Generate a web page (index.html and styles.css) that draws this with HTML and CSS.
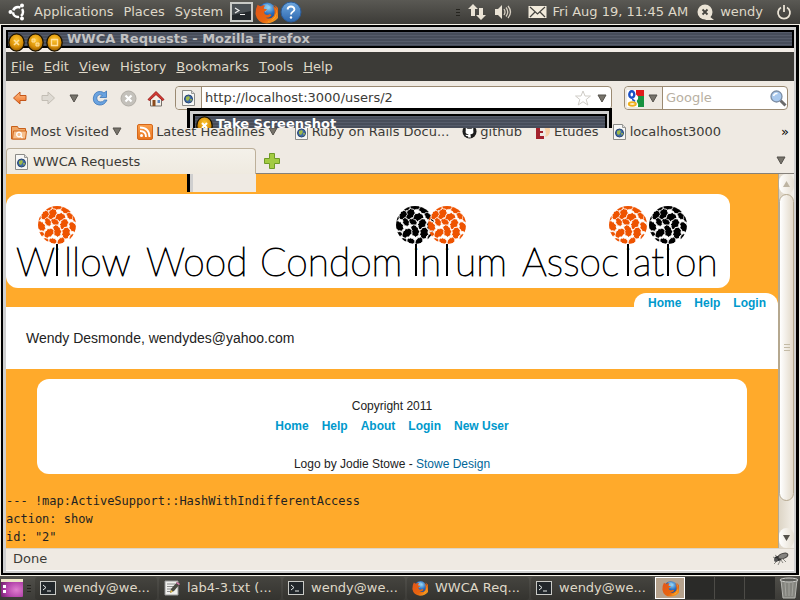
FILE: index.html
```html
<!DOCTYPE html>
<html lang="en">
<head>
<meta charset="utf-8">
<title>WWCA Requests</title>
<link rel="stylesheet" href="styles.css">
</head>
<body>
<svg class="defs" aria-hidden="true">
  <defs>
    <linearGradient id="g-back" x1="0" y1="0" x2="0" y2="1"><stop offset="0" stop-color="#ffc08a"/><stop offset="1" stop-color="#ee7024"/></linearGradient>
    <linearGradient id="g-help" x1="0" y1="0" x2="0" y2="1"><stop offset="0" stop-color="#6fa8e0"/><stop offset="1" stop-color="#2c66ae"/></linearGradient>
    <linearGradient id="g-rss" x1="0" y1="0" x2="0" y2="1"><stop offset="0" stop-color="#fba04e"/><stop offset="1" stop-color="#e8731c"/></linearGradient>
    <radialGradient id="g-knob" cx=".5" cy=".35" r=".7"><stop offset="0" stop-color="#ffc62e"/><stop offset=".6" stop-color="#d88f08"/><stop offset="1" stop-color="#7a4a00"/></radialGradient>
    <radialGradient id="g-globe" cx=".6" cy=".3" r=".7"><stop offset="0" stop-color="#8fd3f5"/><stop offset=".5" stop-color="#2a6ec0"/><stop offset="1" stop-color="#123a7c"/></radialGradient>
    <linearGradient id="g-fox" x1="0" y1="0" x2="1" y2="1"><stop offset="0" stop-color="#e2541a"/><stop offset=".6" stop-color="#e8660f"/><stop offset="1" stop-color="#ffc12e"/></linearGradient>
    <radialGradient id="g-desk" cx=".7" cy=".6" r=".8"><stop offset="0" stop-color="#e07fd0"/><stop offset=".6" stop-color="#b040a8"/><stop offset="1" stop-color="#70206c"/></radialGradient>
    <symbol id="tri" viewBox="0 0 10 9"><path d="M1 1h8L5 8z" fill="#77736b" stroke="#55524c"/></symbol>
    <symbol id="page" viewBox="0 0 15 16"><path d="M1.500.5h9l3 3v12h-12z" fill="#f7f7f5" stroke="#8b8b87"/><path d="M10.500.5v3h3" fill="#ddd" stroke="#9a9a96"/><circle cx="7.500" cy="9" r="4" fill="#3e6aa8" stroke="#28456f"/><path d="M5 7l3-1 1 2-2 3-2-1zM9 9l2 0-1 3z" fill="#9fb84a"/></symbol>
    <symbol id="term" viewBox="0 0 16 14"><rect x=".5" y=".5" width="15" height="13" fill="#22272b" stroke="#c9cac6"/><path d="M3 4l3 2.500L3 9M7 10h4" fill="none" stroke="#e8ecea"/></symbol>
    <symbol id="fox" viewBox="0 0 22 22"><circle cx="11.500" cy="10" r="8.500" fill="url(#g-globe)"/><path d="M8 3l4 0 3 3-3 2-2 3-2-3z" fill="#9ad6f2" opacity=".55"/><path d="M2.500 3.500Q4 4.500 5.500 5 8 3.500 10 4.500 8 5.500 8.500 7.500l3 .5q-.5 1.500-2.500 2-.5 2 1 3 2 1 4-.5 2.500.5 1 2-2 2-5 1.500 5 2 8-2 2-4-1-9.500 3 1.500 4 5-.5-4-3-6 6 3 6 9.500Q20.500 21 11 21.500 2 21 .5 12.500.5 7 2.500 3.500z" fill="url(#g-fox)"/><path d="M19 5q3 7-1 11.500-3 3-7 3 8 0 9.500-7Q21 8 19 5z" fill="#ffcf3a"/></symbol>
    <symbol id="etudes" viewBox="0 0 16 16"><path d="M1 1h8v3H5v3h3v2H5v3h4v3H1z" fill="#a3222c"/><path d="M9 3q6-2 6 3 0 6-5 7 2-4-1-10z" fill="#f6cfa4"/></symbol>
    <clipPath id="crown"><circle r="19"/></clipPath>
    <path id="leaf" d="M-7 1L-6-2-4-2.500-4-4-1-4 1-5.500 3-4 5-4 7 0 5.500 1.500 5 3.500 2 4 0 5.500-2.500 4-5 4.500z"/>
    <g id="tree" clip-path="url(#crown)" stroke="#fff">
      <use href="#leaf" transform="translate(3 -8) rotate(5) scale(.85)"/>
      <use href="#leaf" transform="translate(9 -15) rotate(35) scale(.8)"/>
      <use href="#leaf" transform="translate(-5 -11) rotate(-45) scale(.9)"/>
      <use href="#leaf" transform="translate(-12 -10) rotate(-45) scale(.75)"/>
      <use href="#leaf" transform="translate(0 -18) rotate(8) scale(.75 .55)"/>
      <use href="#leaf" transform="translate(-8 -17) rotate(-25) scale(.5)"/>
      <use href="#leaf" transform="translate(13 -9) rotate(60) scale(.6)"/>
      <use href="#leaf" transform="translate(7 -1) rotate(-55) scale(.85)"/>
      <use href="#leaf" transform="translate(-2 -3) rotate(40) scale(.65)"/>
      <use href="#leaf" transform="translate(-9 -3) rotate(75) scale(.65)"/>
      <use href="#leaf" transform="translate(-16 1) rotate(65) scale(.85)"/>
      <use href="#leaf" transform="translate(0 6) rotate(85) scale(.9)"/>
      <use href="#leaf" transform="translate(9 8) rotate(-70) scale(.9)"/>
      <use href="#leaf" transform="translate(-8 8) rotate(-30) scale(.85)"/>
      <use href="#leaf" transform="translate(16 2) rotate(75) scale(.8)"/>
      <use href="#leaf" transform="translate(-16 9) rotate(10) scale(.5)"/>
      <use href="#leaf" transform="translate(4 16) rotate(-30) scale(.65)"/>
      <use href="#leaf" transform="translate(-4 16) rotate(30) scale(.6)"/>
      <use href="#leaf" transform="translate(-11 15) rotate(30) scale(.4)"/>
      <use href="#leaf" transform="translate(15 12) rotate(-50) scale(.5)"/>
      <use href="#leaf" transform="translate(18 -6) rotate(80) scale(.5)"/>
      <use href="#leaf" transform="translate(-18 -7) rotate(-70) scale(.4)"/>
    </g>
  </defs>
</svg>

<header class="panel">
  <svg class="i-ubuntu" width="18" height="18" viewBox="0 0 18 18"><circle cx="10" cy="9" r="5" fill="none" stroke="#fff" stroke-width="2.500" stroke-dasharray="8.500 2" stroke-dashoffset="4"/><circle cx="2.500" cy="9" r="2" fill="#fff"/><circle cx="14" cy="2.500" r="2" fill="#fff"/><circle cx="14" cy="15.500" r="2" fill="#fff"/></svg>
  <nav class="panel-menu"><button>Applications</button><button>Places</button><button>System</button></nav>
  <div class="launchers">
    <svg width="23" height="20" viewBox="0 0 23 20"><rect x="1" y="1" width="21" height="18" fill="#23282c" stroke="#c9cac6" stroke-width="2"/><path d="M2 2h19v7L2 13z" fill="#4a5054"/><path d="M5 6l4 2.500L5 11M10 12.500h5" fill="none" stroke="#eee" stroke-width="1.200"/></svg>
    <svg width="23" height="23"><use href="#fox"/></svg>
    <svg width="22" height="22" viewBox="0 0 22 22"><circle cx="11" cy="11" r="10" fill="url(#g-help)" stroke="#2b5c99"/><path d="M7.500 8.500Q8 5.500 11 5.500t3.500 2.800Q14.500 10 12.500 11 11 12 11 13.500" fill="none" stroke="#fff" stroke-width="1.800"/><circle cx="11" cy="16.500" r="1.200" fill="#fff"/></svg>
  </div>
  <div class="tray">
    <span class="grip"></span>
    <svg class="i-net" width="18" height="18" viewBox="0 0 18 18" fill="#eae3d5"><path d="M5 1l5 5H7v7H3V6H0zM13 17l5-5h-3V5h-4v7H8z"/></svg>
    <svg class="i-vol" width="17" height="16" viewBox="0 0 17 16"><path d="M0 5h3l4-4v14l-4-4H0z" fill="#eae3d5"/><path d="M9 5q2 3 0 6M11 3.500q3.500 4.500 0 9M13 2q5 6 0 12" fill="none" stroke="#d5cec1" stroke-width="1.300"/></svg>
    <svg class="i-mail" width="19" height="14" viewBox="0 0 19 14"><rect x=".5" y="1" width="18" height="12" fill="#f2ebdc"/><path d="M2 2l7.500 7L17 2M2 12l5-5M17 12l-5-5" fill="none" stroke="#45443f" stroke-width="1.200"/></svg>
    <button class="clock">Fri Aug 19, 11:45 AM</button>
    <svg class="i-chat" width="18" height="16" viewBox="0 0 18 16"><circle cx="8" cy="8" r="7.500" fill="#eae3d5"/><path d="M12 12l5 4H8z" fill="#eae3d5"/><path d="M5.500 5.500l5 5m0-5l-5 5" stroke="#45443f" stroke-width="1.800"/></svg>
    <button class="user">wendy</button>
    <svg class="i-power" width="16" height="16" viewBox="0 0 16 16" fill="none" stroke="#eae3d5" stroke-width="1.800"><path d="M5 3.500a6 6 0 1 0 6 0M8 1v7"/></svg>
  </div>
</header>

<main class="window">
  <div class="titlebar">
    <button class="knob" aria-label="Close window"><svg width="17" height="19" viewBox="0 0 17 19"><ellipse cx="8.500" cy="9.500" rx="7.700" ry="8.700" fill="url(#g-knob)" stroke="#1a1200" stroke-width="1.300"/><path d="M6 7l5 5m0-5l-5 5" stroke="#ffe09a" stroke-width="1.700"/></svg></button>
    <button class="knob" aria-label="Minimize"><svg width="17" height="19" viewBox="0 0 17 19"><ellipse cx="8.500" cy="9.500" rx="7.700" ry="8.700" fill="url(#g-knob)" stroke="#1a1200" stroke-width="1.300"/><path d="M5 6h3v3H5zM9 10h3v3H9z" fill="#ffe09a" stroke="#ffe09a" fill-opacity=".4"/></svg></button>
    <button class="knob" aria-label="Maximize"><svg width="17" height="19" viewBox="0 0 17 19"><ellipse cx="8.500" cy="9.500" rx="7.700" ry="8.700" fill="url(#g-knob)" stroke="#1a1200" stroke-width="1.300"/><path d="M5.500 6.500h6v6h-6z" fill="none" stroke="#ffe09a" stroke-width="1.400"/></svg></button>
    <h1>WWCA Requests - Mozilla Firefox</h1>
  </div>

  <nav class="menubar">
    <button><u>F</u>ile</button><button><u>E</u>dit</button><button><u>V</u>iew</button><button>Hi<u>s</u>tory</button><button><u>B</u>ookmarks</button><button><u>T</u>ools</button><button><u>H</u>elp</button>
  </nav>

  <div class="navbar">
    <div class="nav-buttons">
      <button aria-label="Back"><svg width="16" height="16" viewBox="0 0 16 16"><path d="M1.500 8L8 2v3.500h6v5H8V14z" fill="url(#g-back)" stroke="#c4561a"/></svg></button>
      <button aria-label="Forward"><svg width="16" height="16" viewBox="0 0 16 16"><path d="M14.500 8L8 2v3.500H2v5h6V14z" fill="#dedad3" stroke="#c2bdb4"/></svg></button>
      <button class="history" aria-label="Recent pages"><svg width="10" height="9"><use href="#tri"/></svg></button>
      <button aria-label="Reload"><svg width="16" height="16" viewBox="0 0 16 16"><path d="M14.500 1v6.500H8l2.300-2.300Q7 3.500 5 6.500 4 11 8 12q3 .3 4.500-2h2.500q-2.500 5.500-8 5Q1 14 1.300 8 2.500 1 8.500 1.500q2 .2 3.500 1.500z" fill="#6aa3e0" stroke="#3b75b8" stroke-width=".8"/></svg></button>
      <button class="stop" aria-label="Stop"><svg width="17" height="17" viewBox="0 0 17 17"><circle cx="8.500" cy="8.500" r="7.500" fill="#c4c1bb" stroke="#b1ada6"/><path d="M5.500 5.500l6 6m0-6l-6 6" stroke="#fff" stroke-width="2.200"/></svg></button>
      <button class="home" aria-label="Home"><svg width="18" height="17" viewBox="0 0 18 17"><path d="M3.500 8v8h11V8L9 3z" fill="#f3efe8" stroke="#77706a"/><path d="M1 9.500L9 1.500l8 8-1.500 1L9 4.500l-6.500 6z" fill="#d83a34" stroke="#9b1f1c"/><path d="M5.500 10h3v6h-3z" fill="#8a4b1d"/><path d="M10.500 10h2.500v3h-2.500z" fill="#5c86bf"/></svg></button>
    </div>
    <div class="urlbar">
      <span class="identity"><svg width="15" height="16"><use href="#page"/></svg></span>
      <input type="text" aria-label="Location" value="http://localhost:3000/users/2">
      <button aria-label="Bookmark this page"><svg width="16" height="16" viewBox="0 0 16 16"><path d="M8 1l2 5h5.500l-4.300 3.500L12.800 15 8 11.700 3.200 15l1.600-5.500L.5 6H6z" fill="#fff" stroke="#cfccc6"/></svg></button>
      <button class="drop" aria-label="Show history"><svg width="10" height="9"><use href="#tri"/></svg></button>
    </div>
    <div class="searchbar">
      <button class="engine" aria-label="Search engine"><svg width="17" height="17" viewBox="0 0 17 17"><path d="M0 0h17v17H0z" fill="#fff"/><path d="M9 0h8v6H9z" fill="#e01b1b"/><path d="M8 6h9v11H9z" fill="#18923f"/><path d="M8 4q4 2 3 5-2 2-1 3 2 2 1 5H5V4z" fill="#fff"/><ellipse cx="4.800" cy="4.500" rx="2.500" ry="3.300" fill="#fff" stroke="#1b4fc4" stroke-width="2.400"/><path d="M5 9.500q2 .5 3 2" stroke="#1b4fc4" stroke-width="1.500" fill="none"/><ellipse cx="5.300" cy="14" rx="3.500" ry="1.800" fill="#fff" stroke="#f0b01c" stroke-width="2"/></svg><svg width="10" height="9"><use href="#tri"/></svg></button>
      <input type="text" aria-label="Search" placeholder="Google">
      <button aria-label="Go"><svg width="17" height="17" viewBox="0 0 17 17"><path d="M10.500 10.500l5 5" stroke="#6b6b6b" stroke-width="3"/><circle cx="6.500" cy="6.500" r="5.500" fill="#a9c9ee" stroke="#7c8da3" stroke-width="1.300"/><path d="M3.500 6q1-3 4-2.500" fill="none" stroke="#fff" stroke-width="1.500"/></svg></button>
    </div>
  </div>

  <nav class="bookmarks">
    <a href="#"><svg width="16" height="16" viewBox="0 0 16 16"><path d="M.5 2.500h6l1 2h7v10.500h-14z" fill="#f0a766" stroke="#c8601a"/><path d="M2.500 7h13l-1 8H1.500z" fill="#f7c08e" stroke="#d0661d"/><circle cx="8" cy="10.500" r="2.300" fill="none" stroke="#fff" stroke-width="1.300"/><path d="M9.500 12l2 2" stroke="#fff" stroke-width="1.300"/></svg><span>Most Visited</span><svg width="10" height="9"><use href="#tri"/></svg></a>
    <a class="feed" href="#"><svg width="16" height="16" viewBox="0 0 16 16"><rect x=".5" y=".5" width="15" height="15" rx="1.500" fill="url(#g-rss)" stroke="#d5671a"/><circle cx="4.500" cy="11.500" r="1.500" fill="#fff"/><path d="M3 7q6 0 6 6M3 3.500q9.500 0 9.500 9.500" fill="none" stroke="#fff" stroke-width="1.800"/></svg><span>Latest Headlines</span><svg width="10" height="9"><use href="#tri"/></svg></a>
    <a class="rails" href="#"><svg width="15" height="16"><use href="#page"/></svg><span>Ruby on Rails Docu...</span></a>
    <a class="site" href="#"><svg width="15" height="15" viewBox="0 0 16 16"><circle cx="8" cy="8" r="7.500" fill="#1d1d1d"/><path d="M4 4l2 1h4l2-1v3q1 4-3 4l.5 3.500h-3V13q-2 .5-3-1.500l3 .3L7 11Q3 11 4 7z" fill="#fff"/></svg><span>github</span></a>
    <a class="site" href="#"><svg width="16" height="16"><use href="#etudes"/></svg><span>Etudes</span></a>
    <a class="site" href="#"><svg width="15" height="16"><use href="#page"/></svg><span>localhost3000</span></a>
    <button class="more" aria-label="More bookmarks">»</button>
  </nav>

  <div class="tabs">
    <button class="tab"><svg width="15" height="16"><use href="#page"/></svg><span>WWCA Requests</span></button>
    <div class="tab-rest">
      <button aria-label="New tab"><svg width="16" height="16" viewBox="0 0 16 16"><path d="M5.500.5h5v5h5v5h-5v5h-5v-5h-5v-5h5z" fill="#a3cb42" stroke="#6f9a26"/></svg></button>
      <button aria-label="List all tabs"><svg width="10" height="9"><use href="#tri"/></svg></button>
    </div>
  </div>

  <div class="viewport">
    <div class="ghost"></div>
    <div class="page">
      <div class="logo">
        <svg width="724" height="94" viewBox="0 0 724 94" role="img" aria-label="Willow Wood Condominium Association">
          <text class="wordmark" y="82"><tspan x="10">W</tspan><tspan class="stem" x="51">i</tspan><tspan x="58">llow </tspan><tspan x="140">Wood </tspan><tspan x="254">Condom</tspan><tspan class="stem" x="410">i</tspan><tspan x="414">n</tspan><tspan class="stem" x="441">i</tspan><tspan x="449">um </tspan><tspan x="516">Assoc</tspan><tspan class="stem" x="622">i</tspan><tspan x="627">at</tspan><tspan class="stem" x="662">i</tspan><tspan x="669">on</tspan></text>
          <path d="M51 50v32M410 50v32M441 50v32M622 50v32M662 50v32" stroke="#000" stroke-width="2"/>
          <g fill="#000"><use href="#tree" x="409" y="31"/><use href="#tree" x="662" y="31"/></g>
          <g fill="#ee5300"><use href="#tree" x="51" y="31"/><use href="#tree" x="441" y="31"/><use href="#tree" x="622" y="31"/></g>
        </svg>
      </div>
      <nav class="site-nav"><a href="#">Home</a><a href="#">Help</a><a href="#">Login</a></nav>
      <section class="content"><p>Wendy Desmonde, wendydes@yahoo.com</p></section>
      <footer class="site-footer">
        <p>Copyright 2011</p>
        <nav><a href="#">Home</a><a href="#">Help</a><a href="#">About</a><a href="#">Login</a><a href="#">New User</a></nav>
        <p class="credit">Logo by Jodie Stowe - <a href="#">Stowe Design</a></p>
      </footer>
      <pre class="debug">--- !map:ActiveSupport::HashWithIndifferentAccess
action: show
id: "2"</pre>
    </div>
    <div class="scrollbar" aria-hidden="true">
      <div class="arrow up"><svg width="7" height="6" viewBox="0 0 7 6"><path d="M0 6L3.500 0 7 6z" fill="#bdb4a2"/></svg></div>
      <div class="thumb"><i></i></div>
      <div class="arrow down"><svg width="7" height="6" viewBox="0 0 7 6"><path d="M0 0L3.500 6 7 0z" fill="#55524c"/></svg></div>
    </div>
  </div>

  <div class="status"><span>Done</span><svg width="17" height="15" viewBox="0 0 17 15"><path d="M1 6l4 2M2 13l4-4M6 14l2-4M11 12l-2-3M14 11l-3-3M3 4l4 3" stroke="#8a8882"/><ellipse cx="6" cy="7.500" rx="3.500" ry="2.500" fill="#2b2b2b"/><ellipse cx="11" cy="5" rx="5" ry="2.500" transform="rotate(-20 11 5)" fill="#85837f" stroke="#44423f"/><circle cx="4" cy="9" r="2" fill="#555"/></svg></div>

  <div class="dialog">
    <div class="dialog-title"><svg width="17" height="19" viewBox="0 0 17 19"><ellipse cx="8.500" cy="9.500" rx="7.700" ry="8.700" fill="url(#g-knob)" stroke="#1a1200" stroke-width="1.300"/><path d="M6 7l5 5m0-5l-5 5" stroke="#fff" stroke-width="2"/></svg><span>Take Screenshot</span></div>
  </div>
</main>

<footer class="taskbar">
  <button class="show-desktop" aria-label="Show desktop"><svg width="22" height="18" viewBox="0 0 22 18"><rect width="22" height="18" rx="1" fill="url(#g-desk)"/><path d="M0 0h22v3H0z" fill="#ece5c8"/><path d="M2 6h3v3H2zM2 11h3v3H2z" fill="#fff"/></svg></button>
  <span class="grip"></span>
  <div class="tasks">
    <button><svg width="16" height="14"><use href="#term"/></svg><span>wendy@we...</span></button>
    <button><svg width="16" height="16" viewBox="0 0 16 16"><path d="M1 1h13v14H1z" fill="#efefec" stroke="#999"/><path d="M3 4h8M3 6.500h7M3 9h5M3 11.500h4" stroke="#8c8c8c"/><path d="M6 13l1-4 6-7 3 2-6 7z" fill="#4a4a42"/><path d="M13 2l3 2-1 1-3-2z" fill="#dd7fb4"/><path d="M6 13l1-3 2 1.500z" fill="#e5c04c"/></svg><span>lab4-3.txt (...</span></button>
    <button><svg width="16" height="14"><use href="#term"/></svg><span>wendy@we...</span></button>
    <button><svg width="16" height="16"><use href="#fox"/></svg><span>WWCA Req...</span></button>
    <button><svg width="16" height="14"><use href="#term"/></svg><span>wendy@we...</span></button>
  </div>
  <div class="workspaces">
    <button class="active" aria-label="Workspace 1"><svg width="17" height="17"><use href="#fox"/></svg></button><button aria-label="Workspace 2"></button><button aria-label="Workspace 3"></button><button aria-label="Workspace 4"></button>
  </div>
  <button class="trash" aria-label="Trash"><svg width="20" height="22" viewBox="0 0 20 22"><path d="M2 3l2 18h12l2-18z" fill="#85857f" stroke="#b5b5b0"/><path d="M6 6l1 13M10 6v13M14 6l-1 13" stroke="#a5a59f"/><ellipse cx="10" cy="3" rx="9" ry="2" fill="#5b5b57" stroke="#d0d0cc"/></svg></button>
</footer>
</body>
</html>
```
FILE: styles.css
```css
* { box-sizing: border-box; }

body {
  margin: 0;
  height: 100vh;
  display: flex;
  flex-direction: column;
  overflow: hidden;
  background: #f4f1e8;
  color: #3c3b37;
  font: 13px/16px "DejaVu Sans", sans-serif;
}

button {
  display: flex;
  align-items: center;
  margin: 0;
  padding: 0;
  border: 0;
  background: none;
  color: inherit;
  font: inherit;
  white-space: nowrap;
}

a { color: inherit; text-decoration: none; }
p { margin: 0; }
svg { display: block; flex: none; }
.defs { position: absolute; width: 0; height: 0; }

/* Top desktop panel */
.panel {
  flex: none;
  height: 24px;
  display: flex;
  align-items: center;
  padding: 0 8px;
  background: linear-gradient(#5a5954, #3c3b37);
  color: #dfd8c8;
}
.panel-menu { display: flex; gap: 10px; margin-left: 8px; }
.launchers { display: flex; align-items: center; gap: 2px; margin-left: 7px; }
.tray { display: flex; align-items: center; margin-left: auto; }
.grip {
  flex: none;
  width: 4px;
  height: 7px;
  background: repeating-linear-gradient(#25241f 0 1px, transparent 1px 3px);
}
.i-net { margin-left: 8px; }
.i-vol { margin-left: 9px; }
.i-mail { margin-left: 16px; }
.clock { margin-left: 6px; }
.i-chat { margin-left: 9px; }
.user { margin-left: 5px; }
.i-power { margin-left: 13px; }

/* Browser window frame */
.window {
  position: relative;
  flex: 1;
  min-height: 0;
  display: flex;
  flex-direction: column;
  margin: 1px;
  border: 2px solid #000;
  border-right-width: 3px;
  padding: 3px 2px 2px 3px;
  background: #cfcfcf;
}
.titlebar {
  flex: none;
  height: 18px;
  display: flex;
  align-items: center;
  gap: 2px;
  border: 2px solid #000;
  background: repeating-linear-gradient(#565c6a 0 1px, #474d5a 1px 3px);
  color: #c3c3c3;
}
.knob { position: relative; top: 3px; z-index: 1; }
.titlebar h1 { margin: 0 0 0 2px; font-size: 13px; line-height: 16px; }

.menubar {
  flex: none;
  display: flex;
  gap: 10px;
  height: 33px;
  padding: 0 5px;
  border-top: 4px solid #f2ece6;
  background: #3c3b37;
  color: #dfd8c8;
}

/* Toolbars */
.navbar {
  flex: none;
  display: flex;
  align-items: center;
  gap: 12px;
  height: 34px;
  padding: 0 6px;
  background: #efeae3;
}
.nav-buttons { display: flex; align-items: center; gap: 12px; }
.nav-buttons .history { margin: 0 1px; }
.nav-buttons .stop { margin-right: -2px; }
.urlbar, .searchbar {
  display: flex;
  align-items: center;
  height: 24px;
  border: 1px solid #9b8a72;
  border-radius: 4px;
  background: #fff;
}
.urlbar { flex: 1; margin-left: -2px; }
.searchbar { width: 164px; }
.identity, .engine {
  display: flex;
  align-items: center;
  height: 22px;
  border-right: 1px solid #9b8a72;
  border-radius: 4px 0 0 4px;
  background: #efeae3;
}
.identity { width: 26px; justify-content: center; }
.engine { width: 38px; gap: 4px; padding-left: 2px; }
.navbar input {
  flex: 1;
  min-width: 0;
  padding: 0 3px;
  border: 0;
  outline: 0;
  background: none;
  color: #3c3b37;
  font: inherit;
}
.navbar input::placeholder { color: #b8b0a2; opacity: 1; }
.urlbar .drop { margin: 0 4px 0 6px; }

.bookmarks {
  flex: none;
  display: flex;
  align-items: center;
  height: 33px;
  padding: 0 5px;
  background: #efeae3;
  white-space: nowrap;
}
.bookmarks a { display: flex; align-items: center; gap: 3px; }
.bookmarks .feed { margin-left: 15px; }
.bookmarks .rails { margin-left: 16px; }
.bookmarks .site { margin-left: 13px; }
.bookmarks .more { margin-left: auto; color: #000; }

.tabs { flex: none; display: flex; height: 26px; background: #efeae3; }
.tab {
  width: 250px;
  padding-left: 7px;
  gap: 4px;
  border: 1px solid #bdb09a;
  border-bottom: 0;
  border-radius: 4px 4px 0 0;
  background: linear-gradient(#f4f1ea, #efeae0);
}
.tab-rest {
  flex: 1;
  display: flex;
  align-items: center;
  justify-content: space-between;
  padding: 0 8px;
  border-bottom: 1px solid #85817a;
}

/* Rendered page */
.viewport { position: relative; flex: 1; min-height: 0; display: flex; }
.ghost {
  position: absolute;
  top: 0;
  left: 181px;
  width: 69px;
  height: 18px;
  border-left: 3px solid #000;
  background: linear-gradient(90deg, #cfcfcf 3px, #efeae3 3px);
}
.page {
  flex: 1;
  min-width: 0;
  overflow: hidden;
  padding-top: 20px;
  background: #ffaa2b;
  color: #222;
  font: 12px/20px "Liberation Sans", sans-serif;
}
.logo { width: fit-content; border-radius: 12px; background: #fff; }
.wordmark { font: 100 39px Lato, sans-serif; fill: #000; stroke: #000; stroke-width: 1px; }
.stem { text-anchor: middle; stroke: none; }
.site-nav, .site-footer nav { display: flex; gap: 13px; color: #0099cc; font-weight: bold; }
.site-nav {
  width: fit-content;
  height: 14px;
  margin: 5px 0 0 auto;
  padding: 0 12px 0 14px;
  border-radius: 12px 12px 0 0;
  background: #fff;
}
.content { padding: 21px 20px; background: #fff; font-size: 14px; }
.site-footer {
  margin: 10px 31px 0;
  padding-top: 17px;
  border-radius: 12px;
  background: #fff;
  text-align: center;
}
.site-footer nav { justify-content: center; }
.credit { padding-top: 18px; }
.credit a { color: #006699; }
.debug { margin: 18px 0 0; font: 12px/18px "DejaVu Sans Mono", monospace; }

.scrollbar {
  flex: none;
  width: 16px;
  display: flex;
  flex-direction: column;
  border-left: 1px solid #b5a88f;
  background: linear-gradient(90deg, #ddd5c6, #f3efe8);
}
.arrow { display: flex; justify-content: center; align-items: center; height: 20px; border-radius: 8px; background: linear-gradient(90deg, #fff, #e6dfd2); }
.arrow.down { margin-top: auto; }
.thumb {
  height: 82%;
  display: flex;
  align-items: center;
  justify-content: center;
  border: 1px solid #b5a88f;
  border-radius: 8px;
  background: linear-gradient(90deg, #fff, #e2d9c9);
}
.thumb i { width: 6px; height: 7px; background: repeating-linear-gradient(#c4bba6 0 1px, transparent 1px 3px); }

.status {
  flex: none;
  display: flex;
  align-items: center;
  justify-content: space-between;
  height: 23px;
  padding: 0 5px 2px 7px;
  border-top: 1px solid #dcd5c9;
  border-bottom: 1px solid #fff;
  background: #efeae3;
}

/* Partly painted dialog lying over the toolbars */
.dialog {
  position: absolute;
  top: 81px;
  left: 184px;
  right: 184px;
  height: 20px;
  overflow: hidden;
  border: 3px solid #000;
  border-bottom: 0;
  padding: 3px 2px 0 3px;
  background: #cfcfcf;
}
.dialog-title {
  height: 20px;
  display: flex;
  align-items: flex-start;
  gap: 3px;
  border: 2px solid #000;
  background: repeating-linear-gradient(#565c6a 0 1px, #474d5a 1px 3px);
  padding-left: 1px;
  color: #fff;
  font-weight: bold;
}

/* Bottom desktop panel */
.taskbar {
  flex: none;
  display: flex;
  align-items: center;
  height: 24px;
  padding: 0 1px;
  background: linear-gradient(#504f4a, #3c3b37);
  color: #dfd8c8;
}
.taskbar .grip { margin: 0 4px; }
.tasks { flex: 1; min-width: 0; display: flex; gap: 2px; }
.tasks button {
  flex: 1;
  min-width: 0;
  height: 23px;
  gap: 7px;
  padding-left: 5px;
  border-radius: 3px;
  background: linear-gradient(#45443f, #34332f);
  overflow: hidden;
}
.workspaces { display: flex; margin: 0 4px 0 2px; background: #2a2a28; }
.workspaces button { width: 30px; height: 22px; justify-content: center; border-right: 1px solid #4c4b47; }
.workspaces button:last-child { border-right: 0; }
.workspaces .active { border: 1px solid #fff; background: #b5a28d; }
```
